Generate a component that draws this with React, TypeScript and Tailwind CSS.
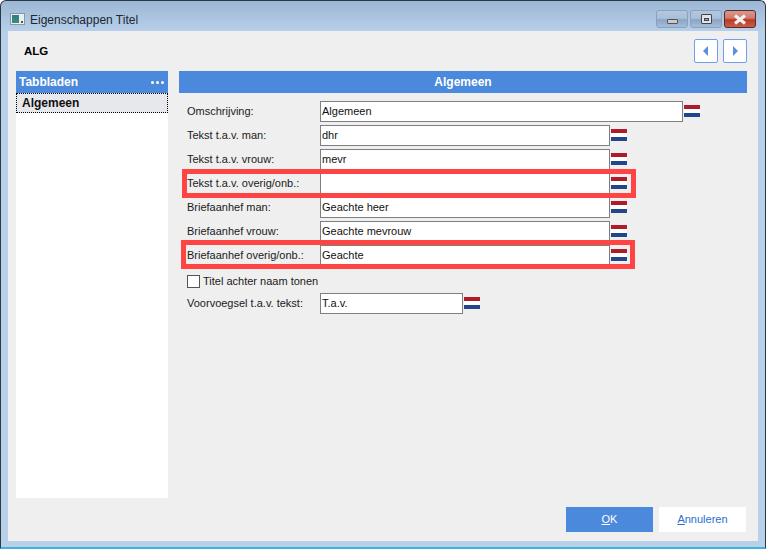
const font = "font-['Liberation_Sans',Arial,sans-serif]";

function Flag() {
  return (
    <div className="flex h-3 w-4 flex-col">
      <div className="h-1 bg-[#ae1c28]" />
      <div className="h-1 bg-white" />
      <div className="h-1 bg-[#21468b]" />
    </div>
  );
}

function Row({ label, value, w = "w-[290px]" }: { label: string; value: string; w?: string }) {
  return (
    <div className="flex h-[21px] items-start">
      <div className="flex h-[21px] w-[133px] items-center text-[#1a1a1a]">{label}</div>
      <div className={`${w} flex h-[21px] items-center border border-[#7f7f7f] bg-white pl-[1px] text-[#111]`}>{value}</div>
      <div className="ml-[1px] mt-1"><Flag /></div>
    </div>
  );
}

function Nav({ dir }: { dir: "l" | "r" }) {
  return (
    <div className="flex h-6 w-6 items-center justify-center rounded-[2px] border border-[#6f9fef] bg-white">
      <svg width="6" height="10" viewBox="0 0 6 10">
        <path d={dir === "l" ? "M5 0V10L0 5Z" : "M1 0V10L6 5Z"} fill="#5b8fdd" />
      </svg>
    </div>
  );
}

function Cap({ kind }: { kind: "min" | "max" | "close" }) {
  if (kind === "close") {
    return (
      <div className="flex h-[18px] w-[32px] items-center justify-center rounded-[3px] border border-[#5a2a30] bg-[linear-gradient(#d99a8c_0%,#cf7a68_45%,#b83a24_55%,#c9604a_100%)]">
        <svg width="16" height="11" viewBox="0 0 16 11">
          <path d="M3 1.5L13 9.5M13 1.5L3 9.5" stroke="#eef0f2" strokeWidth="3.2" />
        </svg>
      </div>
    );
  }
  return (
    <div className="flex h-[18px] w-[32px] items-center justify-center rounded-[3px] border border-[#8aa0bc] bg-[linear-gradient(#b3c8df_0%,#a9c0da_45%,#8aa5c4_55%,#a5bdd8_100%)]">
      {kind === "min" ? (
        <div className="mt-[4px] h-[5px] w-[11px] rounded-[1px] border border-[#555] bg-[#c8ccd0]" />
      ) : (
        <div className="flex h-[10px] w-[11px] items-center justify-center rounded-[1px] border border-[#444] bg-[#dfe4ea]">
          <div className="h-[3px] w-[5px] border border-[#444] bg-[#8fa6c0]" />
        </div>
      )}
    </div>
  );
}

export default function App() {
  return (
    <div className={`${font} relative h-[549px] w-[766px] overflow-hidden bg-white text-[11px] leading-none`}>
      <div className="flex h-[549px] w-[766px] flex-col rounded-t-[6px] border-x border-t border-b-2 border-[#2a3a45] border-b-[#3fb4d8] bg-[#b8d0ea] bg-[linear-gradient(#9cb7d4_0px,#b8d0ea_31px)]">
        {/* Title bar */}
        <div className="flex h-[30px] shrink-0 items-start">
          <div className="ml-[9px] mt-[12px] flex h-[12px] w-[15px] items-end border border-[#8a98a6] bg-[#e8eef4] p-[1px]">
            <div className="h-full w-[8px] bg-[linear-gradient(#2e7d8e,#3a8f6a)]" />
            <div className="ml-[2px] h-[2px] w-[2px] bg-[#555]" />
          </div>
          <div className="ml-[5px] mt-[13px] text-[12px] text-[#1c2733]">Eigenschappen Titel</div>
          <div className="ml-auto mr-[9px] mt-[9px] flex gap-[2px]">
            <Cap kind="min" />
            <Cap kind="max" />
            <Cap kind="close" />
          </div>
        </div>

        {/* Client */}
        <div className="ml-[7px] mr-[7px] flex h-[510px] w-[750px] shrink-0 flex-col bg-[#efefef]">
          <div className="flex h-[40px] shrink-0 items-start justify-between pl-[16px] pr-[11px]">
            <div className="mt-[15px] text-[11.5px] font-bold text-black">ALG</div>
            <div className="mt-[8px] flex gap-[5px]">
              <Nav dir="l" />
              <Nav dir="r" />
            </div>
          </div>

          <div className="flex gap-[11px] pl-2 pr-[11px]">
            {/* Side */}
            <div className="h-[427px] w-[152px] bg-white">
              <div className="flex h-[22px] items-center justify-between bg-[#4a89dc] pl-[3px] pr-[4px] font-bold text-white">
                <span className="text-[12px]">Tabbladen</span>
                <div className="flex gap-[2px]">
                  <i className="h-[3px] w-[3px] rounded-full bg-white" />
                  <i className="h-[3px] w-[3px] rounded-full bg-white" />
                  <i className="h-[3px] w-[3px] rounded-full bg-white" />
                </div>
              </div>
              <div className="flex h-[20px] items-center border border-dotted border-black bg-[#e6e8ec] pl-[5px] text-[12px] font-bold text-[#111]">
                Algemeen
              </div>
            </div>

            {/* Main */}
            <div className="w-[568px]">
              <div className="flex h-[22px] items-center justify-center bg-[#4a89dc] text-[12px] font-bold text-white">Algemeen</div>
              <div className="mt-2 flex flex-col gap-[3px] pl-2">
                <Row label="Omschrijving:" value="Algemeen" w="w-[363px]" />
                <Row label="Tekst t.a.v. man:" value="dhr" />
                <Row label="Tekst t.a.v. vrouw:" value="mevr" />
                <Row label="Tekst t.a.v. overig/onb.:" value="" />
                <Row label="Briefaanhef man:" value="Geachte heer" />
                <Row label="Briefaanhef vrouw:" value="Geachte mevrouw" />
                <Row label="Briefaanhef overig/onb.:" value="Geachte" />
                <div className="mt-[4px] flex h-[17px] items-center">
                  <div className="h-[13px] w-[13px] border border-[#555] bg-white" />
                  <span className="ml-[3px] text-[#1a1a1a]">Titel achter naam tonen</span>
                </div>
                <Row label="Voorvoegsel t.a.v. tekst:" value="T.a.v." w="w-[143px]" />
              </div>
            </div>
          </div>

          <div className="mt-auto mb-[9px] flex justify-end gap-[6px] pr-[12px]">
            <div className="flex h-[25px] w-[87px] items-center justify-center bg-[#4a89dc] text-white"><span><u>O</u>K</span></div>
            <div className="flex h-[25px] w-[87px] items-center justify-center bg-white text-[#2a6fd0]"><span><u>A</u>nnuleren</span></div>
          </div>
        </div>
      </div>

      {/* Annotation boxes */}
      <div className="absolute left-[182px] top-[169px] h-[29px] w-[454px] border-[5px] border-[#ff4444]" />
      <div className="absolute left-[181px] top-[240px] h-[29px] w-[454px] border-[5px] border-[#ff4444]" />
    </div>
  );
}
